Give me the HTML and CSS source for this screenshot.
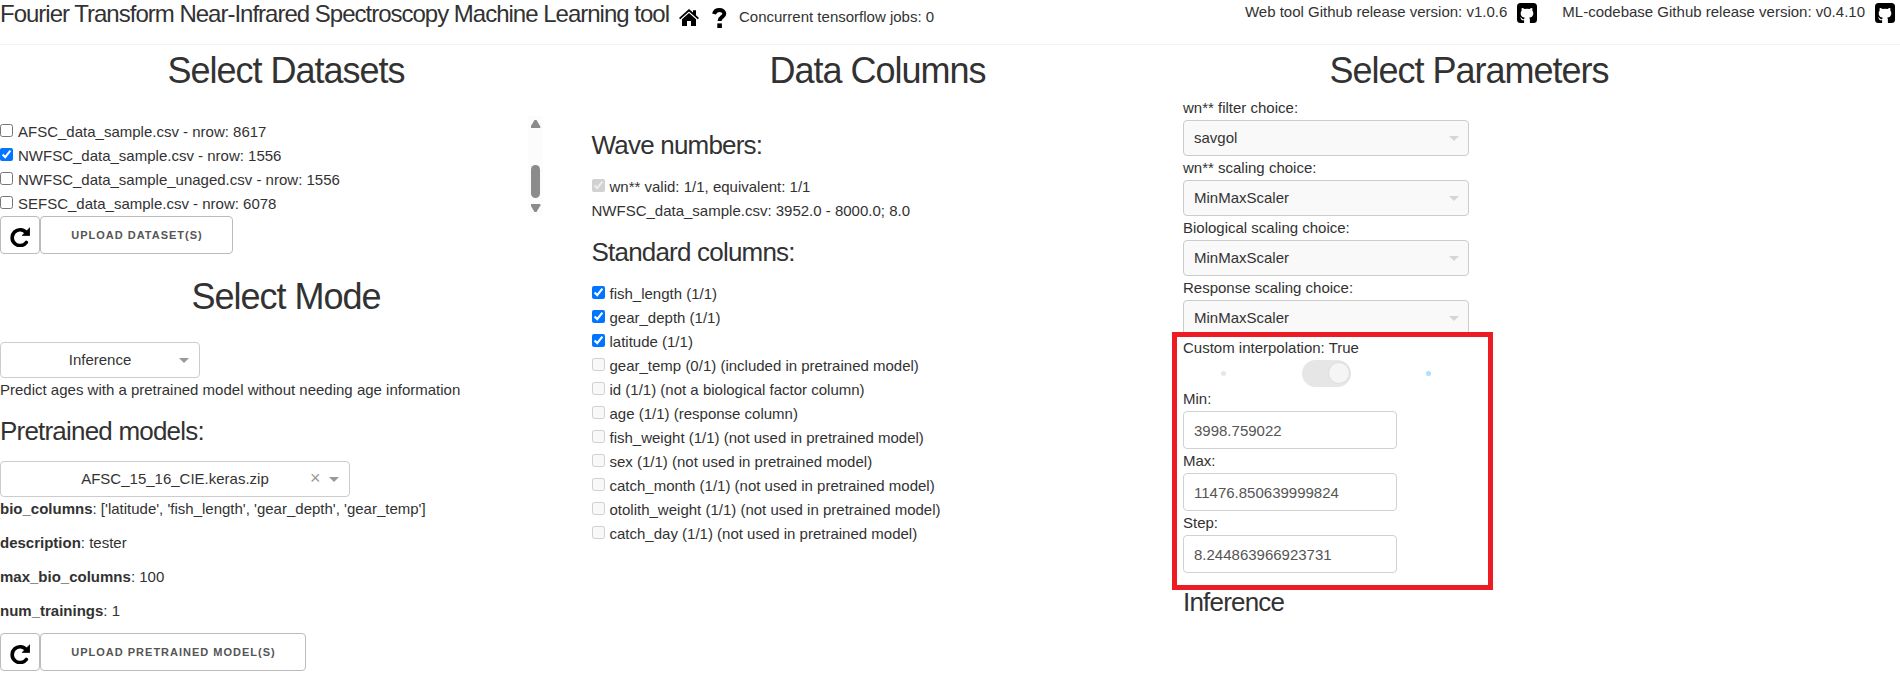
FILE: index.html
```html
<!DOCTYPE html>
<html lang="en">
<head>
<meta charset="utf-8">
<title>Fourier Transform Near-Infrared Spectroscopy Machine Learning tool</title>
<link rel="stylesheet" href="styles.css">
</head>
<body>
<svg class="defs" aria-hidden="true">
  <symbol id="github" viewBox="0 0 20 20"><path fill="#000" fill-rule="evenodd" d="M3.5 0h13A3.5 3.5 0 0 1 20 3.5v13a3.5 3.5 0 0 1-3.500 3.500h-3.600v-3.200c0-1-.3-1.600-.8-2 2.500-.3 4.200-1.400 4.200-4.700 0-1.100-.4-1.900-1-2.600.2-.8.200-1.700-.1-2.500-1-.1-1.900.4-2.700 1a9 9 0 0 0-5 0c-.8-.6-1.700-1.100-2.700-1-.3.800-.3 1.700-.1 2.500-.6.700-1 1.500-1 2.600 0 3.300 1.700 4.400 4.200 4.700-.4.400-.6.800-.7 1.300-1.300.5-2.100 0-2.700-1-.4-.7-1-.9-1.600-.9.200.4.700.7 1 1.500.5 1.400 1.700 1.800 3.200 1.500V20H3.500A3.500 3.500 0 0 1 0 16.500v-13A3.500 3.500 0 0 1 3.500 0z"/></symbol>
  <symbol id="redo" viewBox="0 0 20 20"><path d="M16.200 5.700A7.900 7.900 0 1 0 16.300 15.500" fill="none" stroke="#000" stroke-width="3.600" stroke-linecap="round"/><path d="M19.800.8v7.600h-7.600z" fill="#000" stroke="#000" stroke-width=".8" stroke-linejoin="round"/></symbol>
</svg>
<header class="header">
  <h5 class="title">Fourier Transform Near-Infrared Spectroscopy Machine Learning tool</h5>
  <svg class="home" viewBox="0 0 20 17"><path d="M10 0 14 3.600V1.200h3v5L20 9l-1.200 1.300L10 2.500 1.200 10.300 0 9z"/><path d="M10 4l7 6.200V17h-5v-5H8v5H3v-6.800z"/></svg>
  <svg class="question" viewBox="0 0 15 20"><path d="M2 6C2.800 3.200 4.800 2 7.300 2c3 0 5 1.500 5 3.700 0 3.300-4.700 3.100-4.700 7.300" fill="none" stroke="#000" stroke-width="4"/><path d="M5.300 15.400h4.600V20H5.300z"/></svg>
  <span class="jobs">Concurrent tensorflow jobs: 0</span>
  <div class="releases">
    <span class="release">Web tool Github release version: v1.0.6 <svg class="github"><use href="#github"/></svg></span>
    <span class="release">ML-codebase Github release version: v0.4.10 <svg class="github"><use href="#github"/></svg></span>
  </div>
</header>
<main class="columns">
  <section>
    <h2>Select Datasets</h2>
    <div class="datasets">
      <div class="dataset-list">
        <label class="check"><input type="checkbox">AFSC_data_sample.csv - nrow: 8617</label>
        <label class="check"><input type="checkbox" checked>NWFSC_data_sample.csv - nrow: 1556</label>
        <label class="check"><input type="checkbox">NWFSC_data_sample_unaged.csv - nrow: 1556</label>
        <label class="check"><input type="checkbox">SEFSC_data_sample.csv - nrow: 6078</label>
      </div>
      <div class="scrollbar"><i class="arrow-up"></i><i class="thumb"></i><i class="arrow-down"></i></div>
    </div>
    <div class="buttons"><button class="refresh" aria-label="Refresh datasets"><svg><use href="#redo"/></svg></button><button class="upload">Upload dataset(s)</button></div>
    <h2 class="mode-heading">Select Mode</h2>
    <div class="select mode"><span>Inference</span><i class="caret"></i></div>
    <p>Predict ages with a pretrained model without needing age information</p>
    <h4 class="models-heading">Pretrained models:</h4>
    <div class="select model"><span>AFSC_15_16_CIE.keras.zip</span><b class="clear">×</b><i class="caret"></i></div>
    <div class="meta">
      <p><strong>bio_columns</strong>: ['latitude', 'fish_length', 'gear_depth', 'gear_temp']</p>
      <p><strong>description</strong>: tester</p>
      <p><strong>max_bio_columns</strong>: 100</p>
      <p><strong>num_trainings</strong>: 1</p>
    </div>
    <div class="buttons"><button class="refresh" aria-label="Refresh models"><svg><use href="#redo"/></svg></button><button class="upload pretrained">Upload pretrained model(s)</button></div>
  </section>
  <section>
    <h2>Data Columns</h2>
    <h4 class="wave-heading">Wave numbers:</h4>
    <label class="check"><input type="checkbox" checked disabled>wn** valid: 1/1, equivalent: 1/1</label>
    <p>NWFSC_data_sample.csv: 3952.0 - 8000.0; 8.0</p>
    <h4 class="standard-heading">Standard columns:</h4>
    <label class="check"><input type="checkbox" checked>fish_length (1/1)</label>
    <label class="check"><input type="checkbox" checked>gear_depth (1/1)</label>
    <label class="check"><input type="checkbox" checked>latitude (1/1)</label>
    <label class="check"><input type="checkbox" disabled>gear_temp (0/1) (included in pretrained model)</label>
    <label class="check"><input type="checkbox" disabled>id (1/1) (not a biological factor column)</label>
    <label class="check"><input type="checkbox" disabled>age (1/1) (response column)</label>
    <label class="check"><input type="checkbox" disabled>fish_weight (1/1) (not used in pretrained model)</label>
    <label class="check"><input type="checkbox" disabled>sex (1/1) (not used in pretrained model)</label>
    <label class="check"><input type="checkbox" disabled>catch_month (1/1) (not used in pretrained model)</label>
    <label class="check"><input type="checkbox" disabled>otolith_weight (1/1) (not used in pretrained model)</label>
    <label class="check"><input type="checkbox" disabled>catch_day (1/1) (not used in pretrained model)</label>
  </section>
  <section>
    <h2>Select Parameters</h2>
    <div class="params">
      <p>wn** filter choice:</p>
      <div class="select disabled"><span>savgol</span><i class="caret"></i></div>
      <p>wn** scaling choice:</p>
      <div class="select disabled"><span>MinMaxScaler</span><i class="caret"></i></div>
      <p>Biological scaling choice:</p>
      <div class="select disabled"><span>MinMaxScaler</span><i class="caret"></i></div>
      <p>Response scaling choice:</p>
      <div class="select disabled"><span>MinMaxScaler</span><i class="caret"></i></div>
      <div class="interpolation">
        <p>Custom interpolation: True</p>
        <div class="toggle-row"><i class="dot"></i><span class="toggle"><i class="knob"></i></span><i class="dot on"></i></div>
        <p>Min:</p>
        <input class="number" type="text" value="3998.759022">
        <p>Max:</p>
        <input class="number" type="text" value="11476.850639999824">
        <p>Step:</p>
        <input class="number" type="text" value="8.244863966923731">
        <div class="highlight"></div>
      </div>
      <h4 class="inference-heading">Inference</h4>
    </div>
  </section>
</main>
</body>
</html>
```
FILE: styles.css
```css
* { box-sizing: border-box; }
body {
  margin: 0;
  height: 675px;
  overflow: hidden;
  background: #fff;
  color: #323232;
  font: 15px/24px "Liberation Sans", Arial, sans-serif;
}
h2, h4, h5, p { margin: 0; }
h2, h4, h5 { font-weight: 400; }
h2 { font-size: 36px; line-height: 43px; letter-spacing: -1px; text-align: center; }
h4 { font-size: 26px; line-height: 34px; letter-spacing: -.8px; }
svg { display: block; }
.defs { position: absolute; width: 0; height: 0; }

.header {
  display: flex;
  align-items: flex-start;
  height: 45px;
  border-bottom: 1px solid #f3f3f3;
}
.title { width: 679px; font-size: 24px; line-height: 28px; letter-spacing: -1px; white-space: nowrap; }
.home { width: 20px; height: 17px; margin-top: 9px; }
.question { width: 15px; height: 20px; margin: 8px 0 0 13px; }
.jobs { margin: 5px 0 0 12px; }
.releases { display: flex; gap: 25px; margin-left: auto; padding-right: 5px; }
.release { display: flex; gap: 10px; }
.github { width: 20px; height: 20px; margin-top: 3px; }

.columns { display: grid; grid-template-columns: repeat(3, 572px); column-gap: 19.5px; padding-top: 4px; }
.check { display: flex; height: 24px; }
.check input { width: 13px; height: 13px; margin: 4px 5px 0 0; }

.datasets { display: flex; justify-content: space-between; width: 543px; height: 100px; margin-top: 24px; }
.dataset-list { padding-top: 4px; }
.scrollbar { display: flex; flex-direction: column; align-items: center; width: 15px; background: #fcfcfc; }
.scrollbar i { width: 9px; }
.scrollbar .arrow-up, .scrollbar .arrow-down { width: 10px; height: 8px; background: #8b8b8b; }
.arrow-up { margin-top: 4px; clip-path: polygon(40% 0, 60% 0, 100% 85%, 95% 100%, 5% 100%, 0 85%); }
.arrow-down { margin-top: 6px; clip-path: polygon(40% 100%, 60% 100%, 100% 15%, 95% 0, 5% 0, 0 15%); }
.thumb { height: 33px; margin-top: 37px; border-radius: 5px; background: #8b8b8b; }

.buttons { display: flex; height: 38px; }
.buttons button { height: 38px; padding: 0; border: 1px solid #bbb; border-radius: 4px; background: #fff; color: #555; }
.refresh { width: 40px; }
.refresh svg { width: 20px; height: 20px; margin: 3px 0 0 9px; }
.buttons .upload {
  width: 193px;
  padding-left: 1px;
  font: 600 11px/36px "Liberation Sans", Arial, sans-serif;
  letter-spacing: 1px;
  text-transform: uppercase;
}
.buttons .pretrained { width: 266px; }
.mode-heading { margin-top: 21px; }

.select {
  display: flex;
  align-items: center;
  height: 36px;
  padding: 0 9px 0 10px;
  border: 1px solid #ccc;
  border-radius: 4px;
  color: #333;
}
.select span { flex: 1; }
.caret { width: 0; height: 0; border: solid transparent; border-width: 5px 5px 0; border-top-color: #999; }
.mode { width: 200px; margin-top: 24px; padding-right: 10px; }
.mode span, .model span { text-align: center; }
.mode span { padding-left: 10px; }
.model { width: 350px; margin-top: 13px; padding-right: 10px; }
.model span { padding-left: 39px; }
.clear { width: 10px; margin: 0 9px 2px 10px; color: #999; font-size: 18px; font-weight: 400; }
.models-heading { margin-top: 12px; }
.meta { display: grid; gap: 10px; padding-bottom: 10px; }

.wave-heading { margin-top: 36px; margin-bottom: 13px; }
.standard-heading { margin-top: 12px; margin-bottom: 13px; }

.params { width: 286px; padding-top: 4px; }
.disabled { background: #f9f9f9; }
.disabled .caret { border-top-color: #d6d6d6; }
.interpolation { position: relative; }
.toggle-row { display: flex; align-items: center; justify-content: space-between; height: 27px; padding: 0 38px 0 38px; }
.dot { width: 5px; height: 5px; border-radius: 50%; background: #e6e6e6; }
.dot.on { background: #a9e1ff; }
.toggle { display: flex; justify-content: flex-end; width: 49px; height: 27px; padding: 2px 1px; border-radius: 14px; background: #e6e6e6; }
.knob { width: 22px; height: 22px; border: 1px solid #ddd; border-radius: 50%; background: #f5f5f5; }
.number {
  display: block;
  width: 214px;
  height: 38px;
  padding: 6px 10px;
  border: 1px solid #d1d1d1;
  border-radius: 4px;
  background: #fff;
  color: #555;
  font: inherit;
}
.highlight { position: absolute; top: -4px; left: -11px; width: 321px; height: 258px; border: 5px solid #ed1c24; pointer-events: none; }
.inference-heading { margin-top: 12px; }
```
